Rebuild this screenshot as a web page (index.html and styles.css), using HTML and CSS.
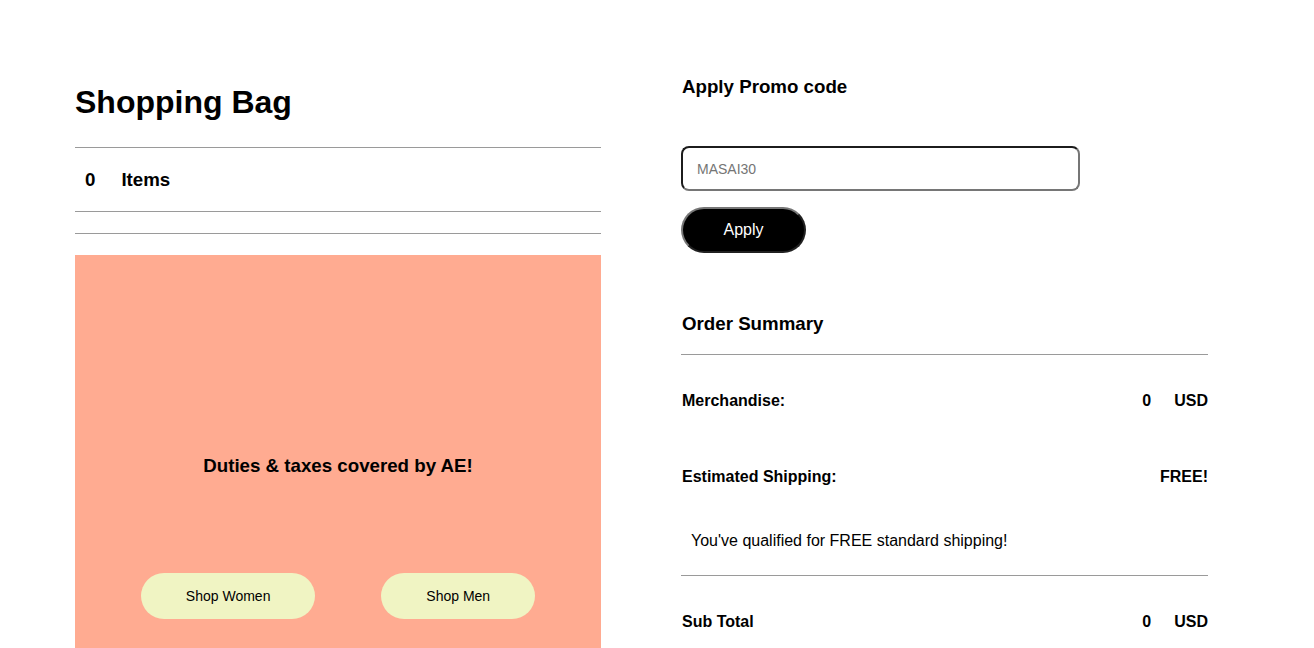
FILE: index.html
```html
<!DOCTYPE html>
<html lang="en">
<head>
<meta charset="utf-8">
<title>Shopping Bag</title>
<link rel="stylesheet" href="styles.css">
</head>
<body>
<div class="page">
  <section class="bag">
    <h1 class="bag-title">Shopping Bag</h1>
    <div class="rule"></div>
    <div class="items-row">
      <span class="count">0</span>
      <span class="items-label">Items</span>
    </div>
    <div class="rule"></div>
    <div class="rule rule-gap"></div>
    <div class="promo-box">
      <h3 class="promo-text">Duties &amp; taxes covered by AE!</h3>
      <div class="shop-buttons">
        <button class="shop-btn">Shop Women</button>
        <button class="shop-btn">Shop Men</button>
      </div>
    </div>
  </section>

  <section class="summary">
    <h3 class="side-title">Apply Promo code</h3>
    <input class="promo-input" type="text" placeholder="MASAI30">
    <button class="apply-btn">Apply</button>

    <h3 class="side-title order-title">Order Summary</h3>
    <div class="rule summary-rule"></div>

    <div class="sum-row merch-row">
      <span>Merchandise:</span>
      <span class="value"><span>0</span><span>USD</span></span>
    </div>
    <div class="sum-row ship-row">
      <span>Estimated Shipping:</span>
      <span class="value"><span>FREE!</span></span>
    </div>
    <p class="qualified">You've qualified for FREE standard shipping!</p>
    <div class="rule total-rule"></div>
    <div class="sum-row total-row">
      <span>Sub Total</span>
      <span class="value"><span>0</span><span>USD</span></span>
    </div>
  </section>
</div>
</body>
</html>
```

FILE: styles.css
```css
* { box-sizing: border-box; }

html, body {
  margin: 0;
  padding: 0;
  background: #ffffff;
  color: #000000;
  font-family: "Liberation Sans", Arial, sans-serif;
}

.page {
  display: flex;
  align-items: flex-start;
  gap: 80px;
  padding-left: 75px;
}

/* Left column */
.bag {
  width: 526px;
  padding-top: 84px;
}

.bag-title {
  margin: 0;
  font-size: 32px;
  line-height: 37px;
  font-weight: bold;
}

.rule {
  height: 1px;
  background: #9a9a9a;
}

.bag-title + .rule { margin-top: 26px; }

.items-row {
  display: flex;
  align-items: center;
  gap: 26px;
  height: 63px;
  padding-left: 10px;
  font-size: 18.72px;
  font-weight: bold;
}

.rule-gap { margin-top: 21px; }

.promo-box {
  margin-top: 21px;
  height: 410px;
  background: #ffab91;
  padding-top: 200px;
}

.promo-text {
  margin: 0;
  text-align: center;
  font-size: 18.72px;
  line-height: 22px;
  font-weight: bold;
}

.shop-buttons {
  display: flex;
  justify-content: space-evenly;
  margin-top: 96px;
}

.shop-btn {
  height: 46px;
  padding: 0 45px;
  border: none;
  border-radius: 23px;
  background: #f0f4c3;
  color: #000;
  font-family: "Liberation Sans", Arial, sans-serif;
  font-size: 14px;
}

/* Right column */
.summary {
  width: 527px;
  padding-top: 76px;
  display: flex;
  flex-direction: column;
  align-items: flex-start;
}

.side-title {
  margin: 0 0 0 1px;
  font-size: 18.72px;
  line-height: 22px;
  font-weight: bold;
}

.promo-input {
  margin-top: 48px;
  width: 399px;
  height: 45px;
  border-style: solid;
  border-width: 2px;
  border-color: #1c1c1c #767676 #767676 #1c1c1c;
  border-radius: 8px;
  padding: 0 14px;
  font-family: "Liberation Sans", Arial, sans-serif;
  font-size: 14px;
  outline: none;
}

.promo-input::placeholder { color: #757575; }

.apply-btn {
  margin-top: 16px;
  width: 125px;
  height: 46px;
  border: 2px outset #767676;
  border-radius: 23px;
  background: #000;
  color: #fff;
  font-family: "Liberation Sans", Arial, sans-serif;
  font-size: 16px;
}

.order-title { margin-top: 60px; }

.summary-rule,
.total-rule {
  width: 100%;
}

.summary-rule { margin-top: 19px; }

.sum-row {
  width: 100%;
  display: flex;
  justify-content: space-between;
  font-size: 16px;
  line-height: 18px;
  font-weight: bold;
  padding-left: 1px;
}

.value {
  display: flex;
  gap: 23px;
}

.merch-row { margin-top: 37px; }
.ship-row { margin-top: 58px; }

.qualified {
  margin: 46px 0 0;
  padding-left: 10px;
  font-size: 16px;
  line-height: 18px;
}

.total-rule { margin-top: 25px; }
.total-row { margin-top: 37px; }
```
